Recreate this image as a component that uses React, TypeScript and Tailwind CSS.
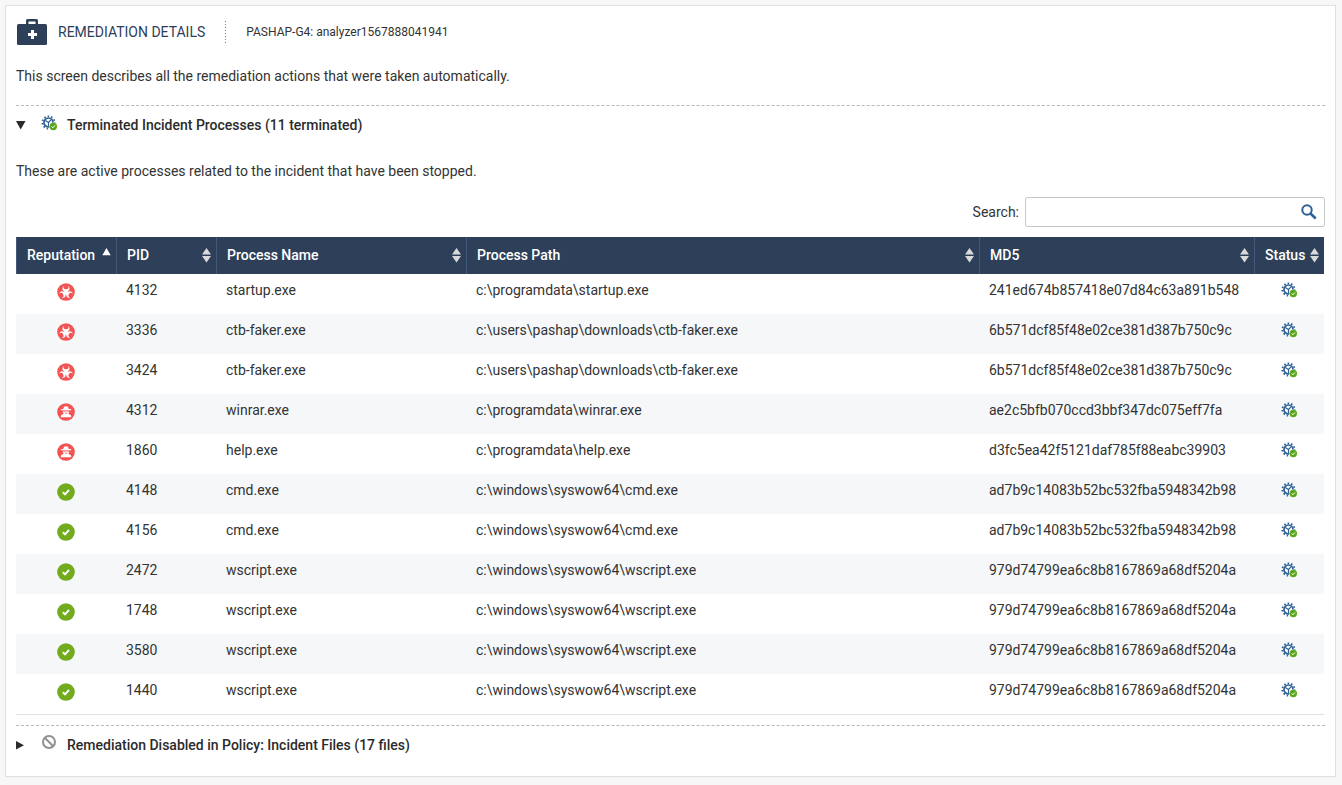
import { useState, type ReactNode } from "react";

type Reputation = "malicious" | "suspicious" | "good";

interface ProcessRow {
  reputation: Reputation;
  pid: number;
  name: string;
  path: string;
  md5: string;
}

const processes: ProcessRow[] = [
  { reputation: "malicious", pid: 4132, name: "startup.exe", path: "c:\\programdata\\startup.exe", md5: "241ed674b857418e07d84c63a891b548" },
  { reputation: "malicious", pid: 3336, name: "ctb-faker.exe", path: "c:\\users\\pashap\\downloads\\ctb-faker.exe", md5: "6b571dcf85f48e02ce381d387b750c9c" },
  { reputation: "malicious", pid: 3424, name: "ctb-faker.exe", path: "c:\\users\\pashap\\downloads\\ctb-faker.exe", md5: "6b571dcf85f48e02ce381d387b750c9c" },
  { reputation: "suspicious", pid: 4312, name: "winrar.exe", path: "c:\\programdata\\winrar.exe", md5: "ae2c5bfb070ccd3bbf347dc075eff7fa" },
  { reputation: "suspicious", pid: 1860, name: "help.exe", path: "c:\\programdata\\help.exe", md5: "d3fc5ea42f5121daf785f88eabc39903" },
  { reputation: "good", pid: 4148, name: "cmd.exe", path: "c:\\windows\\syswow64\\cmd.exe", md5: "ad7b9c14083b52bc532fba5948342b98" },
  { reputation: "good", pid: 4156, name: "cmd.exe", path: "c:\\windows\\syswow64\\cmd.exe", md5: "ad7b9c14083b52bc532fba5948342b98" },
  { reputation: "good", pid: 2472, name: "wscript.exe", path: "c:\\windows\\syswow64\\wscript.exe", md5: "979d74799ea6c8b8167869a68df5204a" },
  { reputation: "good", pid: 1748, name: "wscript.exe", path: "c:\\windows\\syswow64\\wscript.exe", md5: "979d74799ea6c8b8167869a68df5204a" },
  { reputation: "good", pid: 3580, name: "wscript.exe", path: "c:\\windows\\syswow64\\wscript.exe", md5: "979d74799ea6c8b8167869a68df5204a" },
  { reputation: "good", pid: 1440, name: "wscript.exe", path: "c:\\windows\\syswow64\\wscript.exe", md5: "979d74799ea6c8b8167869a68df5204a" },
];

const columns = [
  { label: "Reputation", width: "w-[100px]" },
  { label: "PID", width: "w-[100px]" },
  { label: "Process Name", width: "w-[250px]" },
  { label: "Process Path", width: "" },
  { label: "MD5", width: "w-[275px]" },
  { label: "Status", width: "w-[70px]" },
];

function MedkitIcon() {
  return (
    <svg width="30" height="26" viewBox="0 0 30 26" aria-hidden="true">
      <path d="M9 6V1.500Q9 0 10.500 0H19.500Q21 0 21 1.500V6H18.500V2.500H11.500V6Z" fill="#2e4059" />
      <rect y="5" width="30" height="21" rx="1.500" fill="#2e4059" />
      <path d="M14 11h3v3h3v3h-3v3h-3v-3h-3v-3h3z" fill="#fff" />
    </svg>
  );
}

function GearCheckIcon() {
  return (
    <svg width="16" height="16" viewBox="0 0 16 16" className="block shrink-0" aria-hidden="true">
      <g fill="none" stroke="#2f5f96">
        <circle cx="7.500" cy="7.500" r="4.500" strokeWidth="1.700" />
        <circle cx="7.500" cy="7.500" r="6.100" strokeWidth="1.900" strokeDasharray="1.500 1.984" strokeDashoffset=".75" />
        <path d="M7.500 7.500 4.300 5.400M7.500 7.500l2.800-2.800M7.500 7v4.500" strokeWidth="1.200" />
      </g>
      <circle cx="12.300" cy="11.500" r="4" fill="#fff" />
      <circle cx="12.300" cy="11.500" r="3.700" fill="#58a618" />
      <path d="m10.500 11.500 1.400 1.300 2.200-2.500" fill="none" stroke="#fff" strokeWidth="1" />
    </svg>
  );
}

function DisabledIcon() {
  return (
    <svg width="16" height="16" viewBox="0 0 16 16" className="block shrink-0" aria-hidden="true">
      <g fill="none" stroke="#919191" strokeWidth="2">
        <circle cx="8" cy="7" r="6" />
        <path d="m4 3 8 8" />
      </g>
    </svg>
  );
}

const crescent =
  "M6.800 3C5 4.200 4.900 7.200 7.200 8.200L9 10.200l1.800-2C13.100 7.200 13 4.200 11.200 3c.9 2-.3 3.300-2.200 3.300S5.900 5 6.800 3Z";

function ReputationIcon({ reputation }: { reputation: Reputation }) {
  return (
    <svg width="18" height="18" viewBox="0 0 18 18" className="mx-auto block" role="img" aria-label={reputation}>
      <circle cx="9" cy="9" r="8.800" fill={reputation === "good" ? "#73ab1f" : "#f35353"} />
      {reputation === "malicious" && (
        <g fill="#fff">
          <path d={crescent} />
          <path d={crescent} transform="rotate(120 9 9.600)" />
          <path d={crescent} transform="rotate(240 9 9.600)" />
          <circle cx="9" cy="9.600" r="2" />
        </g>
      )}
      {reputation === "suspicious" && (
        <g fill="#fff">
          <path d="M6.300 6 7 3.700q2-.8 4 0l.7 2.300 2.500.3v.9H3.800v-.9Z" />
          <path d="M5.900 7.700h6.200v1.800L11 11.600H7L5.900 9.500Z" />
          <path d="M6.700 10.900h4.600q3 .5 3 3.300H3.700q0-2.800 3-3.300Z" />
          <path d="M6.200 8.700h2.300M9.500 8.700h2.300M8 10.300h2" stroke="#f35353" strokeWidth=".8" />
        </g>
      )}
      {reputation === "good" && (
        <path d="m5.800 9.300 2.200 2 4-4.300" fill="none" stroke="#fff" strokeWidth="1.900" />
      )}
    </svg>
  );
}

function SearchIcon() {
  return (
    <svg width="16" height="16" viewBox="0 0 16 16" className="block" fill="none" stroke="#2f5f96" aria-hidden="true">
      <circle cx="6" cy="6" r="4.700" strokeWidth="2" />
      <path d="m9.500 9.500 5.200 5" strokeWidth="2.600" />
    </svg>
  );
}

function SortIcon({ sorted }: { sorted: boolean }) {
  if (sorted) {
    return (
      <svg width="9" height="16" viewBox="0 0 9 16" className="shrink-0" fill="#fff" aria-hidden="true">
        <path d="M.3 8.300 4.500 1l4.200 7.300Z" />
      </svg>
    );
  }
  return (
    <svg width="9" height="16" viewBox="0 0 9 16" className="shrink-0" fill="#d9d9d9" aria-hidden="true">
      <path d="M0 7.500 4.500 1 9 7.500ZM0 9h9l-4.500 6.500Z" />
    </svg>
  );
}

interface SectionProps {
  title: string;
  icon: ReactNode;
  defaultOpen?: boolean;
  children?: ReactNode;
}

function Section({ title, icon, defaultOpen = false, children }: SectionProps) {
  const [open, setOpen] = useState(defaultOpen);

  return (
    <section className="border-t border-dashed border-[#b8b8b8]">
      <h2>
        <button
          type="button"
          aria-expanded={open}
          onClick={() => setOpen(!open)}
          className="flex h-[38px] w-full items-center text-left font-medium text-[#2b2b2b]"
        >
          <svg width="10" height="10" viewBox="0 0 10 10" className="mr-[15px] shrink-0" fill="#2b2b2b" aria-hidden="true">
            {open ? <path d="M0 1h9.500L4.700 9.500Z" /> : <path d="M0 1v8.500l8-4.250Z" />}
          </svg>
          <span className="mr-[10px] pb-[5px]">{icon}</span>
          {title}
        </button>
      </h2>
      {open && children}
    </section>
  );
}

function ProcessTable({ rows }: { rows: ProcessRow[] }) {
  return (
    <div className="mt-[10px] pr-px">
      <table className="w-full table-fixed border-separate border-spacing-0 border-b border-[#dee0e8]">
        <thead>
          <tr className="h-[37px] bg-[#2e4059] text-left text-white">
            {columns.map((col, i) => (
              <th key={col.label} className={`border-l border-[#42577a] p-0 pb-[2px] font-medium ${col.width}`}>
                <button
                  type="button"
                  className="flex w-full items-center justify-between pr-[5px] pl-[10px] whitespace-nowrap"
                >
                  {col.label}
                  <SortIcon sorted={i === 0} />
                </button>
              </th>
            ))}
          </tr>
        </thead>
        <tbody>
          {rows.map((row) => (
            <tr key={row.pid} className="h-10 align-top even:bg-[#f5f7f9]">
              <td className="pt-[9px]">
                <ReputationIcon reputation={row.reputation} />
              </td>
              <td className="px-[10px] pt-[6px]">{row.pid}</td>
              <td className="px-[10px] pt-[6px]">{row.name}</td>
              <td className="px-[10px] pt-[6px]">{row.path}</td>
              <td className="px-[10px] pt-[6px]">{row.md5}</td>
              <td className="pt-2">
                <div className="flex justify-center">
                  <GearCheckIcon />
                </div>
              </td>
            </tr>
          ))}
        </tbody>
      </table>
    </div>
  );
}

export default function App() {
  const [query, setQuery] = useState("");
  const rows = processes.filter((p) =>
    `${p.pid} ${p.name} ${p.path} ${p.md5}`.toLowerCase().includes(query.toLowerCase()),
  );

  return (
    <div className="min-h-screen bg-[#f7f7f7] py-[5px] pr-[6px] pl-[5px] font-[Roboto,sans-serif] text-sm leading-5 text-[#333]">
      <main className="border border-[#dee0e6] bg-white px-[10px] pb-3">
        <header className="flex h-[52px] items-center">
          <span className="pl-px">
            <MedkitIcon />
          </span>
          <h1 className="ml-[11px] text-[#2e4059]">REMEDIATION DETAILS</h1>
          <span className="ml-5 h-[22px] w-px bg-[repeating-linear-gradient(#777_0_1px,transparent_1px_3px)]" />
          <span className="ml-5 text-xs">PASHAP-G4: analyzer1567888041941</span>
        </header>

        <p className="mt-2 mb-[19px]">This screen describes all the remediation actions that were taken automatically.</p>

        <Section title="Terminated Incident Processes (11 terminated)" icon={<GearCheckIcon />} defaultOpen>
          <p className="mt-[17px]">These are active processes related to the incident that have been stopped.</p>

          <div className="mt-4 flex items-center justify-end">
            <label htmlFor="process-search" className="mr-[6px]">
              Search:
            </label>
            <div className="flex h-[30px] w-[300px] items-center rounded-[2px] border border-[#c8c8c8] bg-white">
              <input
                id="process-search"
                type="text"
                value={query}
                onChange={(e) => setQuery(e.target.value)}
                className="h-full min-w-0 flex-1 px-2 outline-none"
              />
              <button type="button" aria-label="Search" className="mr-[7px]">
                <SearchIcon />
              </button>
            </div>
          </div>

          <ProcessTable rows={rows} />
          <div className="h-[10px]" />
        </Section>

        <Section title="Remediation Disabled in Policy: Incident Files (17 files)" icon={<DisabledIcon />} />
      </main>
    </div>
  );
}
